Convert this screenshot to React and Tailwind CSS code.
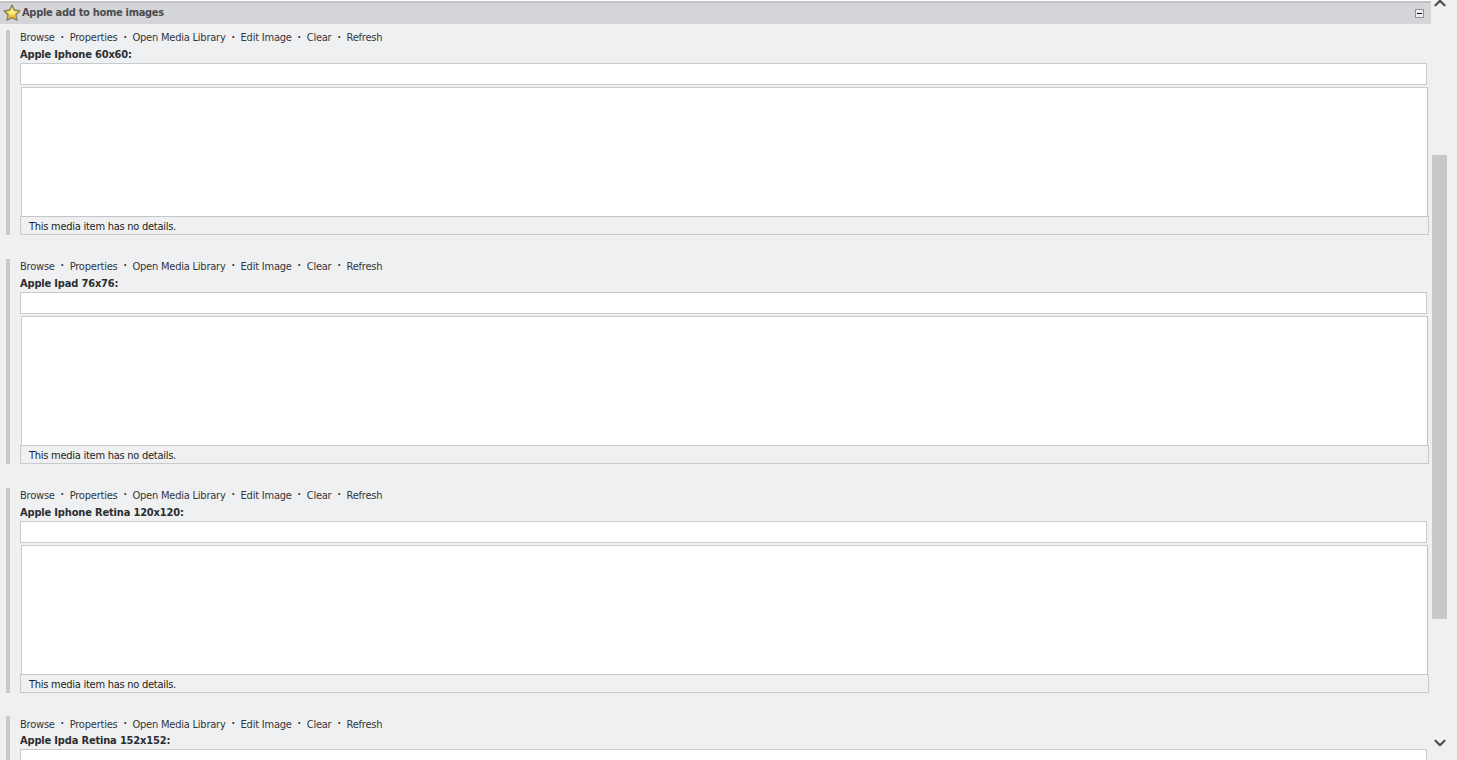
import { ChevronUp, ChevronDown } from "lucide-react";

const links = ["Browse", "Properties", "Open Media Library", "Edit Image", "Clear", "Refresh"];
const fields = ["Apple Iphone 60x60:", "Apple Ipad 76x76:", "Apple Iphone Retina 120x120:", "Apple Ipda Retina 152x152:"];

function StarIcon() {
  return (
    <svg width="18" height="18" viewBox="0 0 18 18" className="shrink-0 -mt-[2px]">
      <path d="M9 1l2.400 5 5.600.8-4 3.900 1 5.500L9 13.600l-5 2.600 1-5.500-4-3.900 5.600-.8z" fill="#edc52c" stroke="#86806a" strokeWidth="1.300" strokeLinejoin="round" />
      <path d="M9 3.500l1.600 3.500 3.600.6-2.700 2.500.4 1.500L9 10.500l-3 1.500.5-2-2.300-2.300 3.300-.6z" fill="#fbec7c" />
    </svg>
  );
}

function MediaField({ label }) {
  return (
    <div className="flex h-[205px] mb-[23.75px] pl-[6px]">
      <div className="w-[4px] h-[205px] bg-[#c8c9cb] shrink-0" />
      <div className="ml-[10px] flex-1 min-w-0">
        <div className="flex items-center h-[15px] pt-[2px] text-[#33373a] tracking-[-0.22px]">
          {links.map((link, i) => (
            <span key={link} className="flex items-center">
              {i > 0 && <span className="w-[15px] -mt-[2px] text-center font-bold text-[10px] leading-none">·</span>}
              <span>{link}</span>
            </span>
          ))}
        </div>
        <div className="h-[18px] pt-[2px] font-bold text-[#2b2e31] leading-[15px] tracking-[-0.17px]">{label}</div>
        <div className="h-[22px] w-[1407px] bg-white border border-[#c9cacc]" />
        <div className="ml-[1px] mt-[2px] h-[129px] w-[1407px] bg-white border border-[#c9cacc] border-r-[#bebfc1] border-b-0" />
        <div className="h-[19px] w-[1409px] border border-t-[#c4c5c7] border-[#c9cacc] pl-[8px] pt-[1px] leading-[17px] text-[#1c1f22] tracking-[-0.26px]">
          This media item has no details.
        </div>
      </div>
    </div>
  );
}

export default function App() {
  return (
    <div className="flex h-[760px] overflow-hidden bg-[#f0f0f0] text-[11px] font-['DejaVu_Sans_Condensed','DejaVu_Sans',sans-serif] [font-stretch:condensed]">
      <div className="w-[1431px] shrink-0 overflow-hidden bg-[#eff0f2]">
        <div className="h-[3px] border-t border-white border-b-2 border-b-[#c2c2c2] bg-white" />
        <div className="flex items-center h-[21px] bg-[#d4d5d8] pl-[3px] pr-[7px]">
          <StarIcon />
          <span className="ml-[1px] font-bold text-[#4a4c50] tracking-[-0.3px]">Apple add to home images</span>
          <div className="ml-auto flex items-center justify-center w-[9px] h-[9px] bg-[#eceef0] border border-[#8f9296]">
            <div className="w-[5px] h-[1px] bg-black" />
          </div>
        </div>
        <div className="pt-[6px]">
          {fields.map((label) => (
            <MediaField key={label} label={label} />
          ))}
        </div>
      </div>
      <div className="relative flex-1 bg-[#f0f0f0] flex flex-col items-start pl-[1px]">
        <ChevronUp size={18} strokeWidth={3} className="absolute -top-[6px] left-[0px] text-[#505050]" />
        <div className="mt-[155px] w-[15px] h-[464px] bg-[#c8c8c8]" />
        <ChevronDown size={18} strokeWidth={3} className="absolute top-[734px] left-[0px] text-[#505050]" />
      </div>
    </div>
  );
}
